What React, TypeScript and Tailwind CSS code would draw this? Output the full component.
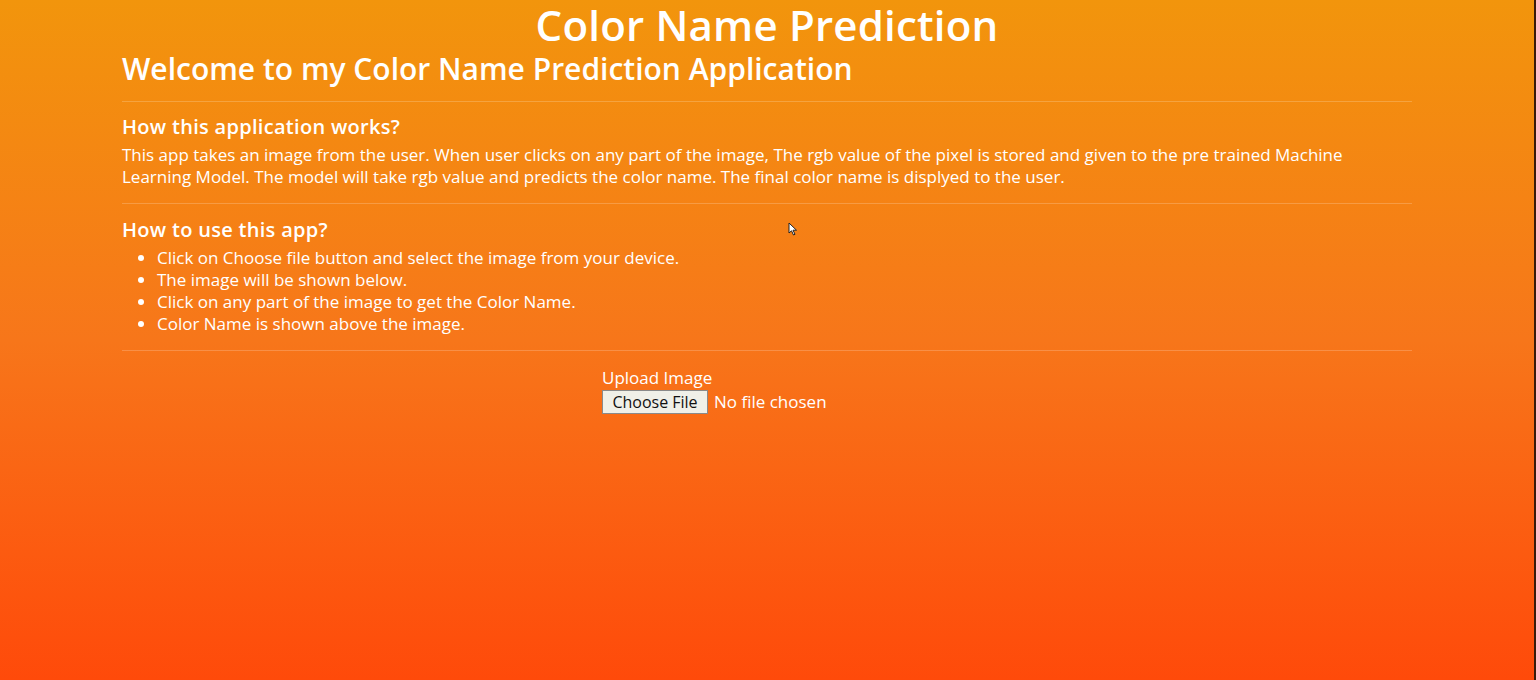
import { useState } from "react";

const steps = [
  "Click on Choose file button and select the image from your device.",
  "The image will be shown below.",
  "Click on any part of the image to get the Color Name.",
  "Color Name is shown above the image.",
];

function Cursor() {
  return (
    <svg className="absolute left-[788px] top-[222px]" width="10" height="14" viewBox="0 0 10 14">
      <path d="M1 1 L1 11 L3.5 8.8 L5.5 13 L7 12.3 L5 8.2 L8.5 8.2 Z" fill="#fff" stroke="#222" strokeWidth="1" />
    </svg>
  );
}

export default function App() {
  const [fileName, setFileName] = useState<string | null>(null);

  return (
    <div className="relative flex h-[680px] w-full font-['Open_Sans','Noto_Sans',sans-serif] text-white">
      <div className="flex-1 bg-[linear-gradient(to_bottom,#f2950c,#f7761a_50%,#ff4a0a)]">
        <h1 className="pt-[1px] text-center text-[42px] leading-[48px] font-semibold tracking-[0.2px]">Color Name Prediction</h1>

        <div className="mx-auto w-[1290px]">
          <h2 className="text-[30px] leading-[40px] font-semibold">Welcome to my Color Name Prediction Application</h2>
          <hr className="mt-[12px] border-t border-white/20" />

          <h5 className="mt-[12px] text-[20px] leading-[26px] font-semibold tracking-[0.3px]">How this application works?</h5>
          <p className="mt-[4px] text-[17px] leading-[22px]">
            This app takes an image from the user. When user clicks on any part of the image, The rgb value of the pixel is stored and given to the pre trained Machine Learning Model. The model will take rgb value and predicts the color name. The final color name is displyed to the user.
          </p>
          <hr className="mt-[15px] border-t border-white/20" />

          <h5 className="mt-[13px] text-[20px] leading-[26px] font-semibold tracking-[0.3px]">How to use this app?</h5>
          <ul className="mt-[4px] list-disc pl-[35px] text-[17px] leading-[22px]">
            {steps.map((s) => (
              <li key={s}>{s}</li>
            ))}
          </ul>
          <hr className="mt-[15px] border-t border-white/20" />

          <div className="mx-auto mt-[16px] w-[330px] pr-[6px] text-[17px]">
            <label className="block leading-[22px]">Upload Image</label>
            <label className="flex items-center gap-[6px]">
              <span className="flex h-[24px] w-[106px] items-center justify-center border border-[#8a8a8a] bg-[#f0f0e8] text-[16px] text-[#111]">
                Choose File
              </span>
              <span>{fileName ?? "No file chosen"}</span>
              <input
                type="file"
                className="hidden"
                onChange={(e) => setFileName(e.target.files?.[0]?.name ?? null)}
              />
            </label>
          </div>
        </div>
      </div>
      <div className="w-[2px] bg-[#3a1a0a]" />
      <Cursor />
    </div>
  );
}
